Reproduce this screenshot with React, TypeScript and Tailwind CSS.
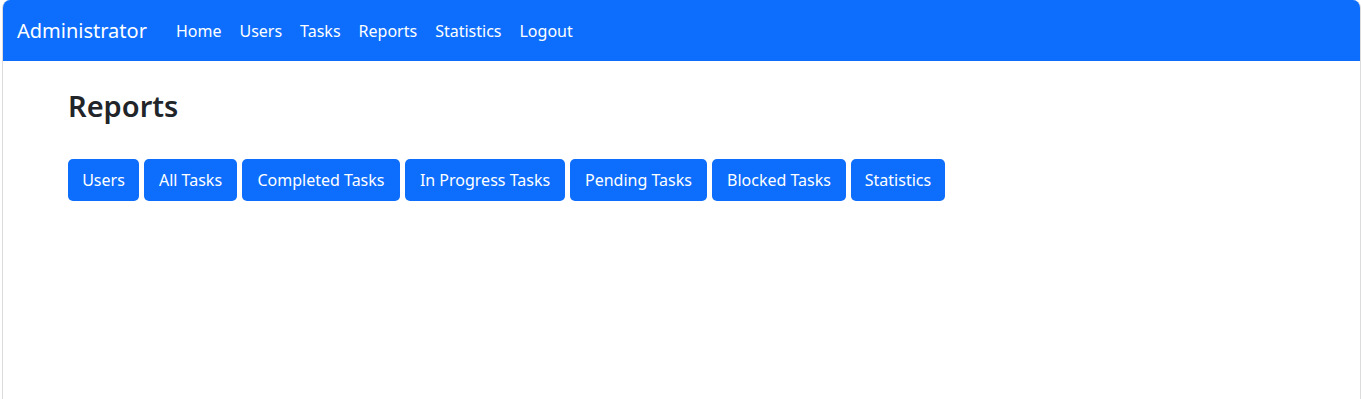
const navLinks = ['Home', 'Users', 'Tasks', 'Reports', 'Statistics', 'Logout'];

// widths measured off the original page
const reportButtons = [
    { label: 'Users', w: 'w-[71px]' },
    { label: 'All Tasks', w: 'w-[93px]' },
    { label: 'Completed Tasks', w: 'w-[158px]' },
    { label: 'In Progress Tasks', w: 'w-[160px]' },
    { label: 'Pending Tasks', w: 'w-[137px]' },
    { label: 'Blocked Tasks', w: 'w-[134px]' },
    { label: 'Statistics', w: 'w-[94px]' },
];

export default function App() {
    return (
        <div className="w-[1362px] h-[399px] bg-white overflow-hidden font-['Noto_Sans',sans-serif]">
            <div className="ml-[2px] w-[1359px] h-[399px] border-x border-[#dcdcdc] rounded-t-[8px] overflow-hidden">
                {/* Navbar */}
                <nav className="h-[61px] bg-[#0d6efd] flex items-center pl-[14px]">
                    <span className="text-white text-[20px] mr-[20px]">Administrator</span>
                    <div className="flex items-center">
                        {navLinks.map((link) => (
                            <a key={link} href="#" className="text-white text-[16px] px-[9px]">
                                {link}
                            </a>
                        ))}
                    </div>
                </nav>

                {/* Content */}
                <div className="pl-[65px] pt-[28px]">
                    <h2 className="text-[29px] font-semibold text-[#212529] leading-[1.2]">Reports</h2>
                    <div className="mt-[35px] flex gap-[5px]">
                        {reportButtons.map((b) => (
                            <button
                                key={b.label}
                                className={`${b.w} h-[42px] bg-[#0d6efd] text-white text-[16px] rounded-[5px] text-center`}
                            >
                                {b.label}
                            </button>
                        ))}
                    </div>
                </div>
            </div>
        </div>
    );
}
